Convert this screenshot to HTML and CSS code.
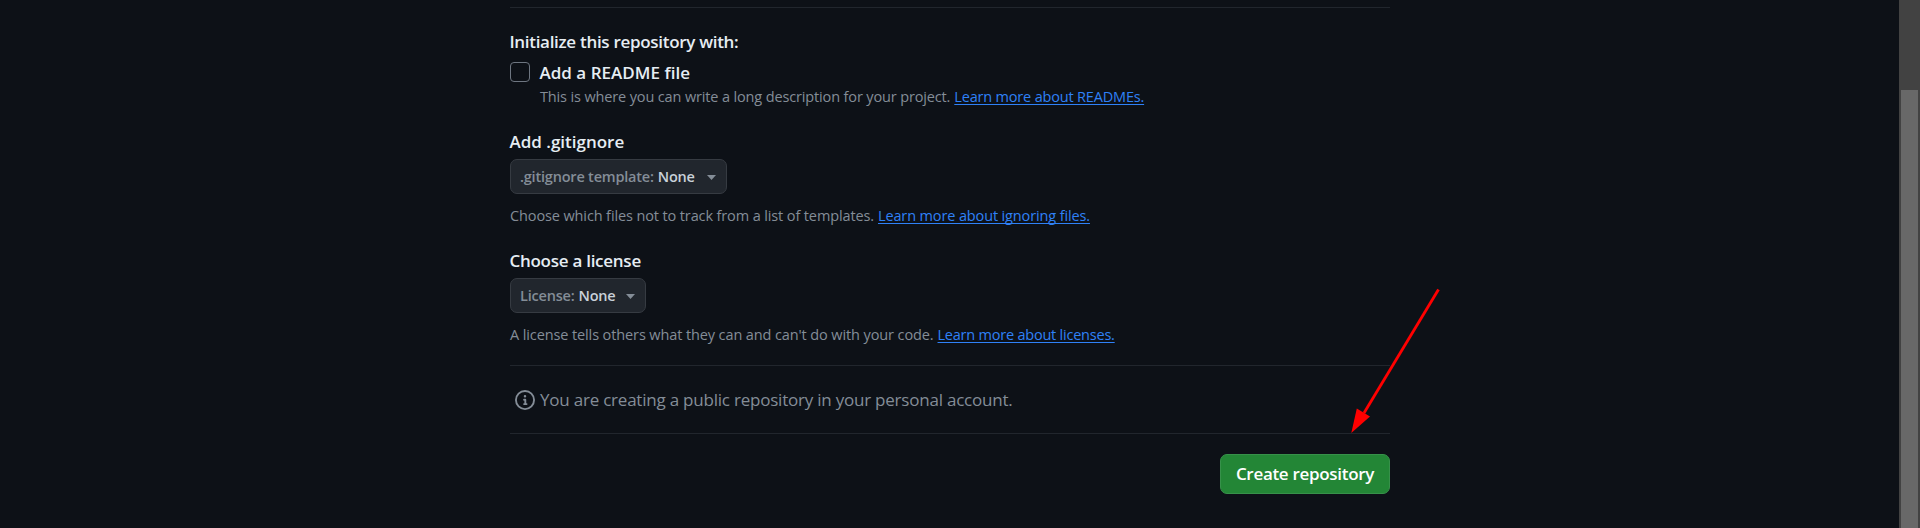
FILE: index.html
```html
<!DOCTYPE html>
<html lang="en">
<head>
<meta charset="utf-8">
<title>Create a new repository</title>
<link rel="stylesheet" href="styles.css">
</head>
<body>
<main class="page">
  <form class="form">
    <hr class="rule">
    <section class="init">
      <h2 class="heading init-title">Initialize this repository with:</h2>
      <div class="readme">
        <span class="checkbox"></span>
        <div>
          <label class="heading readme-label">Add a README file</label>
          <p class="note"><span class="note-readme">This is where you can write a long description for your project.</span> <a class="link link-readme">Learn more about READMEs.</a></p>
        </div>
      </div>
    </section>
    <section class="field field-ignore">
      <h2 class="heading ignore-title">Add .gitignore</h2>
      <button type="button" class="select select-ignore"><span class="select-label">.gitignore template:</span><b class="select-value">None</b><svg class="caret" width="9" height="5" viewBox="0 0 9 5"><path d="M0 0h9L4.5 5z"/></svg></button>
      <p class="note"><span class="note-ignore">Choose which files not to track from a list of templates.</span> <a class="link link-ignore">Learn more about ignoring files.</a></p>
    </section>
    <section class="field field-license">
      <h2 class="heading license-title">Choose a license</h2>
      <button type="button" class="select select-license"><span class="select-label">License:</span><b class="select-value">None</b><svg class="caret" width="9" height="5" viewBox="0 0 9 5"><path d="M0 0h9L4.5 5z"/></svg></button>
      <p class="note"><span class="note-license">A license tells others what they can and can't do with your code.</span> <a class="link link-license">Learn more about licenses.</a></p>
    </section>
    <hr class="rule">
    <div class="info">
      <svg class="info-icon" width="20" height="20" viewBox="0 0 16 16"><path d="M0 8a8 8 0 1 1 16 0A8 8 0 0 1 0 8Zm8-6.5a6.5 6.5 0 1 0 0 13 6.5 6.5 0 0 0 0-13ZM6.5 7.75A.75.75 0 0 1 7.25 7h1a.75.75 0 0 1 .75.75v2.75h.25a.75.75 0 0 1 0 1.5h-2a.75.75 0 0 1 0-1.5h.25v-2h-.25a.75.75 0 0 1-.75-.75ZM8 6a1 1 0 1 1 0-2 1 1 0 0 1 0 2Z"/></svg>
      <span class="info-text">You are creating a public repository in your personal account.</span>
    </div>
    <hr class="rule">
    <button type="button" class="create">Create repository</button>
  </form>
</main>
<div class="scrollbar"><div class="thumb"></div></div>
<svg class="arrow" width="100" height="150" viewBox="1345 285 100 150"><path d="M1438.500 289.500L1364 413" stroke="#f00" stroke-width="2.800"/><path d="M1351.300 433L1356.800 408.500L1370 416.500Z" fill="#f00"/></svg>
</body>
</html>
```
FILE: styles.css
```css
* { box-sizing: border-box; }
body {
  margin: 0;
  height: 528px;
  overflow: hidden;
  display: flex;
  background: #0d1117;
  color: #e6edf3;
  font-family: "Open Sans", "Noto Sans", sans-serif;
}
.page { flex: 1; padding: 7px 0 0 510px; }
.form { width: 880px; display: flex; flex-direction: column; }
.rule { width: 100%; height: 1px; margin: 0; border: 0; background: #21262d; }
.heading {
  display: block;
  margin: 0;
  font-size: 17px;
  font-weight: 600;
  line-height: 26px;
  text-indent: -0.6px;
  white-space: nowrap;
}
.init-title { letter-spacing: -0.3px; }
.readme-label { letter-spacing: 0.03px; }
.license-title { letter-spacing: -0.26px; }
.init { margin-top: 21px; }
.readme { display: flex; gap: 10px; margin-top: 5px; }
.checkbox {
  width: 20px;
  height: 20px;
  margin-top: 2px;
  border: 1px solid #6e7681;
  border-radius: 4px;
}
.note {
  display: flex;
  gap: 4px;
  margin: 0;
  font-size: 14.5px;
  line-height: 22px;
  color: #848d97;
  white-space: nowrap;
}
.note-readme { letter-spacing: -0.14px; }
.note-ignore { letter-spacing: -0.12px; }
.note-license { letter-spacing: -0.11px; }
.link {
  color: #2f81f7;
  text-decoration: underline;
  text-decoration-thickness: 1px;
  text-underline-offset: 2px;
  text-decoration-skip-ink: none;
}
.link-readme { letter-spacing: -0.18px; }
.link-ignore { letter-spacing: -0.13px; }
.link-license { letter-spacing: -0.22px; }
.field { display: flex; flex-direction: column; align-items: flex-start; }
.field-ignore { margin-top: 21px; }
.field-license { margin: 21px 0 19px; }
.select {
  display: flex;
  align-items: center;
  height: 35px;
  margin: 4px 0 11px;
  padding: 0 10px 0 9px;
  border: 1px solid #363b42;
  border-radius: 7px;
  background: #21262d;
  color: #c9d1d9;
  font: 600 14.5px/22px "Open Sans", "Noto Sans", sans-serif;
  letter-spacing: -0.2px;
  white-space: nowrap;
}
.select-ignore { width: 217px; }
.select-license { width: 136px; }
.select-label { color: #848d97; }
.select-value { margin-left: 4px; font-weight: 600; }
.caret { margin: 2px 0 0 auto; fill: #848d97; }
.info { display: flex; align-items: center; height: 67px; padding-left: 5px; gap: 5px; color: #848d97; }
.info-icon { fill: #848d97; }
.info-text { font-size: 17px; line-height: 26px; letter-spacing: -0.22px; white-space: nowrap; }
.create {
  align-self: flex-end;
  width: 170px;
  height: 40px;
  margin-top: 20px;
  padding: 0;
  border: 1px solid #37914a;
  border-radius: 7px;
  background: #238636;
  color: #fff;
  font: 600 17px/26px "Open Sans", "Noto Sans", sans-serif;
  letter-spacing: -0.3px;
}
.scrollbar { width: 21px; background: #424242; padding: 90px 2px 0; }
.thumb { height: 438px; background: #686868; }
.arrow { position: absolute; left: 1345px; top: 285px; }
```
